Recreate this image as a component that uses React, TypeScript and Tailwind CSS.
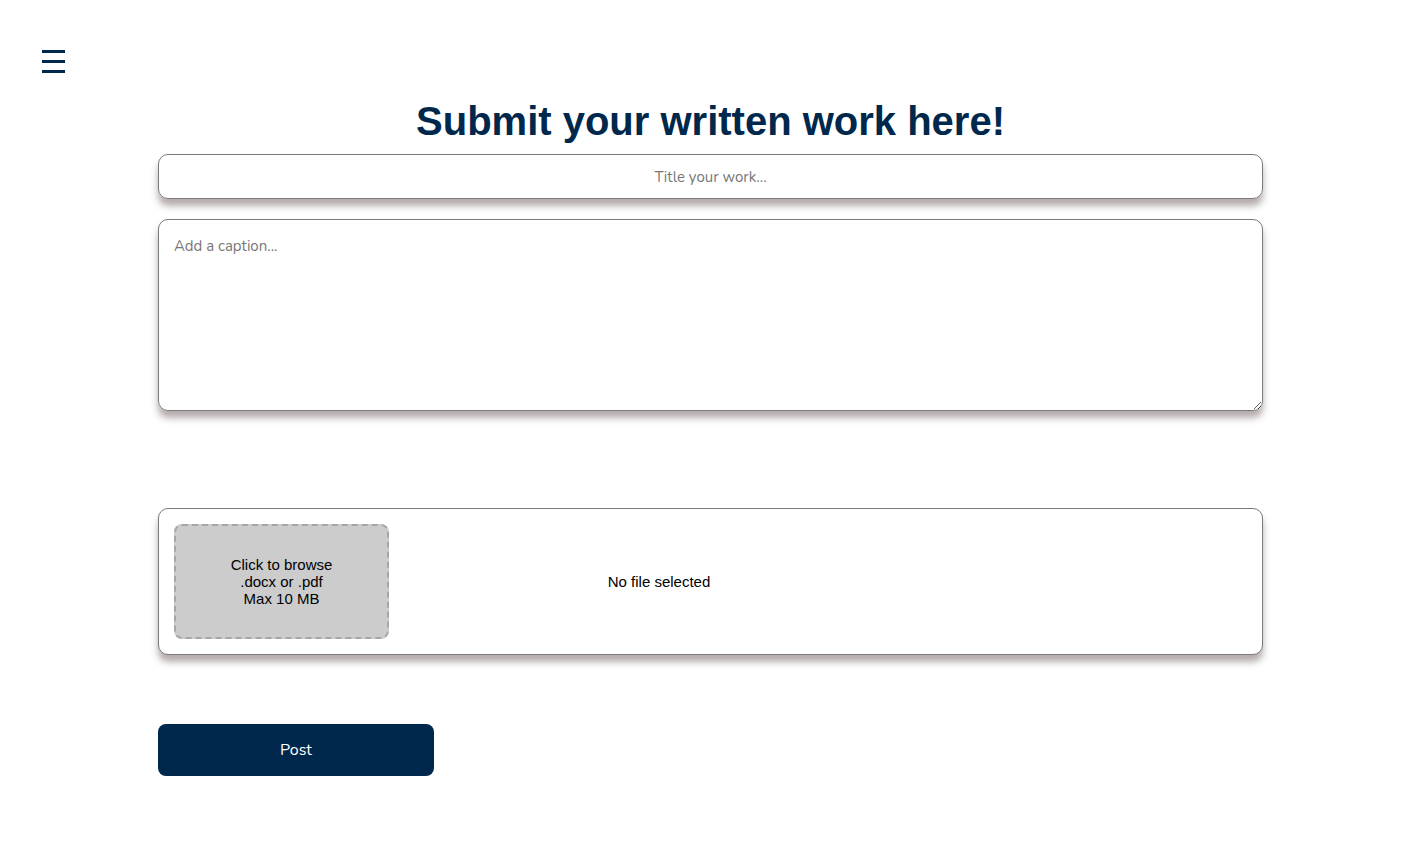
import React from "react";

export default function App() {
  return (
    <div className="min-h-[842px] w-full bg-white font-['Liberation_Sans',Arial,sans-serif]">
      <div className="h-[96px] pl-[42px] pt-[50px]">
        <button className="flex w-[23px] flex-col gap-[7px]">
          <span className="block h-[3px] w-[23px] bg-[#00284c]" />
          <span className="block h-[3px] w-[23px] bg-[#00284c]" />
          <span className="block h-[3px] w-[23px] bg-[#00284c]" />
        </button>
      </div>
      <div className="ml-[158px] w-[1105px]">
        <h1 className="text-center text-[40px] font-bold leading-[50px] text-[#00284c]">
          Submit your written work here!
        </h1>
        <input
          placeholder="Title your work..."
          className="mt-[8px] block h-[45px] w-full rounded-[10px] border border-[#7a7a7a] text-center font-['Nunito','Lato',sans-serif] text-[15px] text-[#333] placeholder:text-[#777] shadow-[0_7px_7px_rgba(90,70,70,0.45)] outline-none"
        />
        <textarea
          placeholder="Add a caption..."
          className="mt-[20px] block h-[192px] w-full rounded-[10px] border border-[#7a7a7a] px-[15px] pt-[15px] font-['Nunito','Lato',sans-serif] text-[15px] text-[#333] placeholder:text-[#777] shadow-[0_7px_7px_rgba(90,70,70,0.45)] outline-none"
        />
        <div className="mt-[97px] flex h-[147px] w-full items-center rounded-[10px] border border-[#7a7a7a] bg-white pl-[15px] shadow-[0_7px_7px_rgba(90,70,70,0.45)]">
          <div className="flex h-[115px] w-[215px] flex-col items-center justify-center rounded-[8px] border-2 border-dashed border-[#a6a6a6] bg-[#cccccc] text-center text-[15px] leading-[17px] text-black">
            <span>Click to browse</span>
            <span>.docx or .pdf</span>
            <span>Max 10 MB</span>
          </div>
          <span className="w-[540px] pt-[2px] text-center text-[15px] text-black">No file selected</span>
        </div>
        <button className="mt-[69px] flex h-[52px] w-[276px] items-center justify-center rounded-[8px] bg-[#00284c] font-['Nunito','Lato',sans-serif] text-[16px] text-white">
          Post
        </button>
      </div>
    </div>
  );
}
